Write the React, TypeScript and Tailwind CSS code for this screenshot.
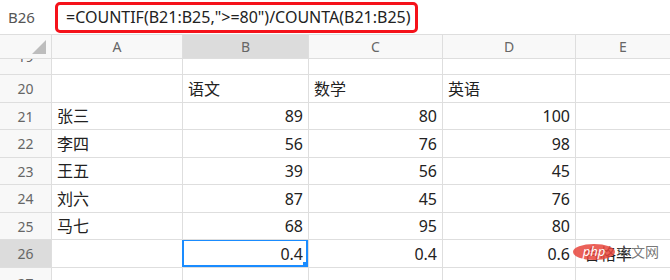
const FONT = "font-['Noto_Sans','Noto_Sans_CJK_SC',sans-serif]";

const COLS = [
  { key: 'A', w: 'w-[131px]' },
  { key: 'B', w: 'w-[126px]' },
  { key: 'C', w: 'w-[134px]' },
  { key: 'D', w: 'w-[133px]' },
];

type Row = { n: number; h: string; cells: (string | number)[]; clip?: 'top' | 'bottom' };

const ROWS: Row[] = [
  { n: 19, h: 'h-[16px]', cells: ['', '', '', '', ''], clip: 'top' },
  { n: 20, h: 'h-[28px]', cells: ['', '语文', '数学', '英语', ''] },
  { n: 21, h: 'h-[27px]', cells: ['张三', 89, 80, 100, ''] },
  { n: 22, h: 'h-[28px]', cells: ['李四', 56, 76, 98, ''] },
  { n: 23, h: 'h-[27px]', cells: ['王五', 39, 56, 45, ''] },
  { n: 24, h: 'h-[28px]', cells: ['刘六', 87, 45, 76, ''] },
  { n: 25, h: 'h-[27px]', cells: ['马七', 68, 95, 80, ''] },
  { n: 26, h: 'h-[28px]', cells: ['', 0.4, 0.4, 0.6, '合格率'] },
  { n: 27, h: 'h-[28px]', cells: ['', '', '', '', ''], clip: 'bottom' },
];

export default function App() {
  return (
    <div className={`h-[280px] w-[670px] overflow-hidden bg-white ${FONT}`}>
      <div className="flex h-[34px] items-center">
        <div className="w-[55px] pl-[8px] text-[15px] text-[#555]">B26</div>
        <div className="flex h-[31px] w-[363px] items-center rounded-[5px] border-[3px] border-[#f5121a] pl-[8px] text-[16px] text-[#222]">
          =COUNTIF(B21:B25,"&gt;=80")/COUNTA(B21:B25)
        </div>
      </div>

      <div className="flex h-[25px] border-y border-[#dedede] bg-[#f8f8f8] text-[14px] text-[#666]">
        <div className="relative w-[52px] border-r border-[#dedede]">
          <div className="absolute bottom-[4px] right-[5px] h-0 w-0 border-b-[14px] border-l-[14px] border-b-[#bdbdbd] border-l-transparent" />
        </div>
        {COLS.map((c) => (
          <div
            key={c.key}
            className={`${c.w} flex items-center justify-center border-r border-[#dedede] ${c.key === 'B' ? 'bg-[#dcdcdc]' : ''}`}
          >
            {c.key}
          </div>
        ))}
        <div className="flex flex-1 items-center justify-center">E</div>
      </div>

      {ROWS.map((row) => (
        <div key={row.n} className={`flex ${row.h} overflow-hidden border-b border-[#dedede] text-[16px] text-[#222]`}>
          <div
            className={`flex w-[52px] justify-center overflow-hidden border-r border-[#dedede] text-[14px] text-[#666] ${
              row.n === 26 ? 'bg-[#dcdcdc]' : 'bg-[#f8f8f8]'
            } ${row.clip ? 'items-start' : 'items-center'}`}
          >
            <span className={row.clip === 'top' ? '-mt-[13px]' : row.clip === 'bottom' ? 'mt-[5px]' : ''}>{row.n}</span>
          </div>
          {COLS.map((c, i) => {
            const v = row.cells[i];
            const isNum = typeof v === 'number';
            const selected = row.n === 26 && c.key === 'B';
            return (
              <div
                key={c.key}
                className={`relative ${c.w} flex items-center border-r border-[#dedede] ${
                  isNum ? 'justify-end pr-[5px]' : 'pl-[5px]'
                }`}
              >
                {v}
                {selected ? (
                  <>
                    <div className="pointer-events-none absolute -left-[1px] -top-[1px] bottom-[0px] right-[0px] border-2 border-[#1a8cff]" />
                    <div className="absolute bottom-[0px] right-[0px] h-[5px] w-[5px] bg-[#1a8cff]" />
                  </>
                ) : null}
              </div>
            );
          })}
          <div className="relative flex flex-1 items-center pl-[8px]">
            {row.cells[4]}
            {row.n === 26 ? (
              <div className="absolute left-[-3px] top-[1px] flex items-center">
                <div className="flex h-[16px] w-[42px] items-center justify-center rounded-[50%] bg-[#e8453c]/85 text-[13px] italic leading-none text-white">
                  php
                </div>
                <span className="ml-[2px] text-[14px] text-[#555]/80">中文网</span>
              </div>
            ) : null}
          </div>
        </div>
      ))}
    </div>
  );
}
